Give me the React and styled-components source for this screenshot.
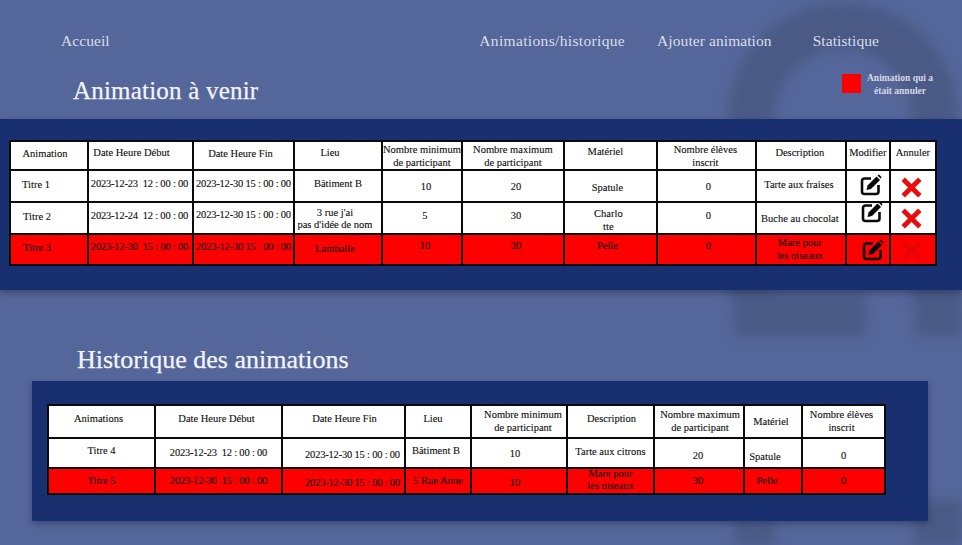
import React from "react";
import styled, { createGlobalStyle } from "styled-components";

const upcomingCols = [78, 105, 101, 88, 79, 102, 93, 99, 90, 44, 46];
const historyCols = [107, 127, 123, 66, 96, 87, 90, 58, 83];

const upcomingHead = {
  height: 29,
  cells: [
    "Animation",
    "Date Heure Début",
    "Date Heure Fin",
    "Lieu",
    ["Nombre minimum", "de participant"],
    ["Nombre maximum", "de participant"],
    "Matériel",
    ["Nombre élèves", "inscrit"],
    "Description",
    "Modifier",
    "Annuler"
  ],
  // the cells of the original are not centred, each one sits a little off
  nudge: [[-4, -1], [-9, -2], [-3, -1], [-8, -2], [0, 1], [0, 1], [-5, -3], [-1, 1], [-1, -2], [0, -2], [0, -2]]
};

const upcomingRows = [
  {
    height: 32,
    cells: [
      "Titre 1",
      "2023-12-23  12 : 00 : 00",
      "2023-12-30 15 : 00 : 00",
      "Bâtiment B",
      "10",
      "20",
      "Spatule",
      "0",
      "Tarte aux fraises"
    ],
    nudge: [[-13, -1], [-1, -2], [0, -2], [0, -2], [4, 1], [3, 1], [-3, 2], [2, 1], [-2, -1], [3, -1], [-1, 1]]
  },
  {
    height: 32,
    cells: [
      "Titre 2",
      "2023-12-24  12 : 00 : 00",
      "2023-12-30 15 : 00 : 00",
      ["3 rue j'ai", "pas d'idée de nom"],
      "5",
      "30",
      ["Charlo", "tte"],
      "0",
      "Buche au chocolat"
    ],
    nudge: [[-12, -1], [-1, -2], [0, -3], [-3, 1], [3, -2], [3, -2], [-2, 2.5], [2, -2], [-1, 1], [4, -6], [-1, 0]]
  },
  {
    height: 31,
    cancelled: true,
    cells: [
      "Titre 3",
      "2023-12-30  15 : 00 : 00",
      "2023-12-30 15 : 00 : 00",
      "Lamballe",
      "10",
      "30",
      "Pelle",
      "0",
      ["Mare pour", "les oiseaux"]
    ],
    nudge: [[-12, -1], [-1, -2], [0, -2], [-3, 0], [3, -3], [3, -3], [-3, -3], [2, -3], [-1, 0], [5, 0], [-1, 1]]
  }
];

const historyHead = {
  height: 33,
  cells: [
    "Animations",
    "Date Heure Début",
    "Date Heure Fin",
    "Lieu",
    ["Nombre minimum", "de participant"],
    "Description",
    ["Nombre maximum", "de participant"],
    "Matériel",
    ["Nombre élèves", "inscrit"]
  ],
  nudge: [[-3, -2], [-2, -2], [1, -2], [-5, -2], [4, 0], [1, -2], [1, 0], [-2, 1], [-2, 0]]
};

const historyRows = [
  {
    height: 30,
    cells: [
      "Titre 4",
      "2023-12-23  12 : 00 : 00",
      "2023-12-30 15 : 00 : 00",
      "Bâtiment B",
      "10",
      "Tarte aux citrons",
      "20",
      "Spatule",
      "0"
    ],
    nudge: [[0, -2], [0, 0], [9, 2], [-2, -2], [-4, 1], [0, -1], [-1, 3], [-8, 4], [0, 3]]
  },
  {
    height: 26,
    cancelled: true,
    cells: [
      "Titre 5",
      "2023-12-30  15 : 00 : 00",
      "2023-12-30 15 : 00 : 00",
      "5 Rue Anne",
      "10",
      ["Mare pour", "les oiseaux"],
      "30",
      "Pelle",
      "0"
    ],
    nudge: [[0, 0], [0, 0], [9, 2], [0, 0], [-4, 2], [0, -1], [-1, 0], [-6, 0], [0, 0]]
  }
];

const isDate = text => typeof text === "string" && /^\d{4}-/.test(text);

const Lines = ({ value }) =>
  Array.isArray(value) ? (
    <div>
      {value.map(line => (
        <div key={line}>{line}</div>
      ))}
    </div>
  ) : (
    value
  );

const EditIcon = () => (
  <EditSvg viewBox="0 0 22 22">
    <path className="box" d="M11 4.5 H4.5 a2.5 2.5 0 0 0 -2.5 2.5 V17.5 a2.5 2.5 0 0 0 2.5 2.5 H16 a2.5 2.5 0 0 0 2.5 -2.5 V11" />
    <polygon points="6.5,16 7.5,11.5 16.5,2.5 20,6 11,15" />
    <polygon points="17.5,1.5 19,0.5 21.5,3 20.8,4.8" />
  </EditSvg>
);

const Cross = ({ dim }) => (
  <CrossSvg viewBox="0 0 24 24" $dim={dim}>
    <path d="M2.5 2.5 L21.5 21.5 M21.5 2.5 L2.5 21.5" />
  </CrossSvg>
);

const Cell = ({ as, height, nudge, tight, children }) => (
  <CellTag as={as}>
    <CellBox $h={height - 2} $dx={nudge[0]} $dy={nudge[1]} $tight={tight}>
      {children}
    </CellBox>
  </CellTag>
);

const EventTable = ({ cols, head, rows, actions }) => (
  <Table>
    <colgroup>
      {cols.map((w, i) => (
        <Col key={i} $w={w} />
      ))}
    </colgroup>
    <thead>
      <Row $h={head.height}>
        {head.cells.map((c, i) => (
          <Cell key={i} as="th" height={head.height} nudge={head.nudge[i]}>
            <Lines value={c} />
          </Cell>
        ))}
      </Row>
    </thead>
    <tbody>
      {rows.map((row, r) => (
        <Row key={r} $h={row.height} $cancelled={row.cancelled}>
          {row.cells.map((c, i) => (
            <Cell key={i} height={row.height} nudge={row.nudge[i]} tight={isDate(c)}>
              <Lines value={c} />
            </Cell>
          ))}
          {actions && (
            <>
              <Cell height={row.height} nudge={row.nudge[9]}>
                <EditIcon />
              </Cell>
              <Cell height={row.height} nudge={row.nudge[10]}>
                <Cross dim={row.cancelled} />
              </Cell>
            </>
          )}
        </Row>
      ))}
    </tbody>
  </Table>
);

export default function App() {
  return (
    <Page>
      <GlobalStyle />
      <Backdrop viewBox="0 0 962 545" aria-hidden="true">
        <path d="M751 300 V118 a92 92 0 0 1 184 0 V300" />
        <rect x="735" y="292" width="130" height="44" />
        <rect x="915" y="292" width="47" height="44" />
        <rect x="735" y="520" width="40" height="30" />
        <rect x="915" y="500" width="47" height="45" />
      </Backdrop>
      <Content>
        <Nav>
          <NavLink>Accueil</NavLink>
          <NavGroup>
            <NavLink $spread>Animations/historique</NavLink>
            <NavLink>Ajouter animation</NavLink>
            <NavLink>Statistique</NavLink>
          </NavGroup>
        </Nav>
        <TitleRow>
          <Title>Animation à venir</Title>
          <Legend>
            <Swatch />
            <LegendText>
              Animation qui a
              <br />
              était annuler
            </LegendText>
          </Legend>
        </TitleRow>
        <WidePanel>
          <EventTable cols={upcomingCols} head={upcomingHead} rows={upcomingRows} actions />
        </WidePanel>
        <HistoryTitle>Historique des animations</HistoryTitle>
        <BoxPanel>
          <EventTable cols={historyCols} head={historyHead} rows={historyRows} />
        </BoxPanel>
      </Content>
    </Page>
  );
}

const GlobalStyle = createGlobalStyle`
  html, body {
    margin: 0;
    background: #55669a;
  }
`;

const Page = styled.div`
  position: relative;
  width: 962px;
  height: 545px;
  overflow: hidden;
  background: #55669a;
  font-family: "Liberation Serif", "DejaVu Serif", serif;
`;

const Backdrop = styled.svg`
  position: absolute;
  inset: 0;
  width: 962px;
  height: 545px;
  filter: blur(6px);

  path {
    fill: none;
    stroke: #4a5a85;
    stroke-width: 46;
  }

  rect {
    fill: #4a5a85;
  }
`;

const Content = styled.div`
  position: relative;
  display: flex;
  flex-direction: column;
`;

const Nav = styled.nav`
  display: flex;
  justify-content: space-between;
  height: 62px;
  padding: 32px 83px 0 61px;
  box-sizing: border-box;
`;

const NavGroup = styled.div`
  display: flex;
  gap: 32px;
`;

const NavLink = styled.a`
  color: #d9deea;
  font-size: 15.5px;
  line-height: 18px;
  letter-spacing: ${p => (p.$spread ? "0.34px" : "0.08px")};
  white-space: nowrap;

  &:last-child {
    margin-left: 9px;
  }
`;

const TitleRow = styled.div`
  display: flex;
  justify-content: space-between;
  height: 57px;
  padding: 12px 29px 0 73px;
  box-sizing: border-box;
`;

const Title = styled.h1`
  margin: 0;
  color: #f2f4f8;
  font-size: 25px;
  font-weight: 400;
  line-height: 34px;
  letter-spacing: 0.2px;
  -webkit-text-stroke: 0.25px #f2f4f8;
`;

const Legend = styled.div`
  display: flex;
  align-items: flex-start;
  gap: 6px;
`;

const Swatch = styled.div`
  width: 19px;
  height: 19px;
  background: #ff0000;
`;

const LegendText = styled.div`
  width: 66px;
  margin-top: -2px;
  color: #d5d9e6;
  font-size: 9.5px;
  font-weight: 700;
  line-height: 13px;
  text-align: center;
  white-space: nowrap;
`;

const WidePanel = styled.section`
  height: 171px;
  padding: 21px 0 0 9px;
  box-sizing: border-box;
  background: #18306f;
  box-shadow: 0 3px 6px rgba(20, 30, 60, 0.4);
`;

const HistoryTitle = styled.h2`
  margin: 56px 0 7px 77px;
  color: #f2f4f8;
  font-size: 26px;
  font-weight: 400;
  line-height: 28px;
  -webkit-text-stroke: 0.25px #f2f4f8;
`;

const BoxPanel = styled.section`
  width: 896px;
  height: 140px;
  margin-left: 32px;
  padding: 23px 0 0 15px;
  box-sizing: border-box;
  background: #18306f;
  box-shadow: 0 3px 6px rgba(20, 30, 60, 0.4);
`;

const Table = styled.table`
  table-layout: fixed;
  border-collapse: collapse;
  background: #fff;
  color: #111;
  font-size: 10.5px;
  line-height: 12.5px;
  text-align: center;
  -webkit-text-stroke: 0.12px #111;
`;

const Col = styled.col`
  width: ${p => p.$w}px;
`;

const Row = styled.tr`
  height: ${p => p.$h}px;
  background: ${p => (p.$cancelled ? "#ff0000" : "#fff")};
`;

const CellTag = styled.td`
  padding: 0;
  border: 2px solid #0a0a0a;
  font-weight: 400;
`;

const CellBox = styled.div`
  display: flex;
  align-items: center;
  justify-content: center;
  height: ${p => p.$h}px;
  padding: ${p => Math.max(0, p.$dy * 2)}px ${p => Math.max(0, -p.$dx * 2)}px
    ${p => Math.max(0, -p.$dy * 2)}px ${p => Math.max(0, p.$dx * 2)}px;
  box-sizing: border-box;
  overflow: hidden;
  white-space: pre;
  letter-spacing: ${p => (p.$tight ? "-0.2px" : "0")};
`;

const EditSvg = styled.svg`
  display: block;
  flex: none;
  width: 22px;
  height: 22px;

  .box {
    fill: none;
    stroke: #0a0a0a;
    stroke-width: 2.6;
  }

  polygon {
    fill: #0a0a0a;
    stroke: none;
  }
`;

const CrossSvg = styled.svg`
  display: block;
  flex: none;
  width: 21px;
  height: 21px;

  path {
    fill: none;
    stroke: ${p => (p.$dim ? "#e60505" : "#ee0b0b")};
    stroke-width: 5.5;
  }
`;
